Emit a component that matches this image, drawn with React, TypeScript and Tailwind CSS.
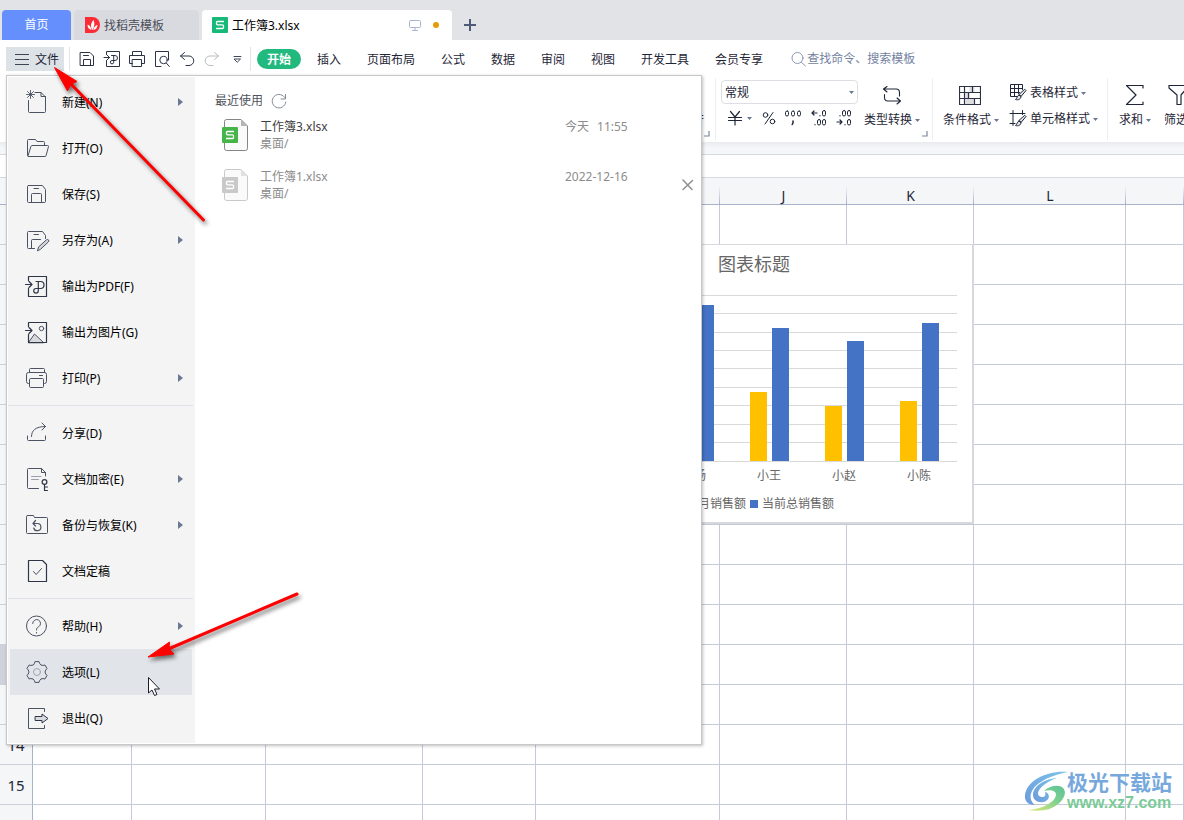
import { ReactNode } from 'react';
import clsx from 'clsx';

type IconProps = { size?: number; className?: string; children: ReactNode };

function Icon({ size = 20, className, children }: IconProps) {
  return (
    <svg
      width={size}
      height={size}
      viewBox={`0 0 ${size} ${size}`}
      fill="none"
      stroke="currentColor"
      strokeLinejoin="round"
      strokeLinecap="round"
      aria-hidden="true"
      className={clsx('block shrink-0', className)}
    >
      {children}
    </svg>
  );
}

function Caret() {
  return (
    <svg width="5" height="3" viewBox="0 0 5 3" className="block shrink-0" aria-hidden="true">
      <path d="M0 0h5L2.5 3z" fill="#6b7894" />
    </svg>
  );
}

function Corner() {
  return (
    <svg width="6" height="6" viewBox="0 0 6 6" className="block shrink-0" aria-hidden="true">
      <path d="M5 0v5H0" fill="none" stroke="#7d879d" strokeWidth="1.2" />
    </svg>
  );
}

// six-lobed outline for the options icon
const gearPath = () => {
  const pts: string[] = [];
  for (let i = 0; i < 6; i++) {
    for (const [deg, r] of [[-17, 9], [-11, 10.6], [11, 10.6], [17, 9], [30, 8]]) {
      const a = ((i * 60 + deg - 90) * Math.PI) / 180;
      pts.push(`${(14 + r * Math.cos(a)).toFixed(2)} ${(14 + r * Math.sin(a)).toFixed(2)}`);
    }
  }
  return `M${pts.join('L')}Z`;
};

type MenuItem = { label: string; icon: ReactNode; sub?: boolean; active?: boolean };

const menuGroups: MenuItem[][] = [
  [
    {
      label: '新建(N)',
      sub: true,
      icon: (
        <>
          <path d="M5.5 12.5v11q0 1 1 1h15q1 0 1-1V9L18 4.5h-6M18 4.5v4h4.5" />
          <path d="M7.5 2.5v8M3.5 6.5h8M4.5 3.5l6 6M10.5 3.5l-6 6" strokeWidth="0.9" />
        </>
      ),
    },
    {
      label: '打开(O)',
      icon: (
        <>
          <path d="M21.5 11V8.5q0-1-1-1H14L12.5 5.5h-7q-1 0-1 1v15q0 1 1 1" />
          <path d="M9.3 11.5h15.2q1.2 0 1 1l-2.4 9q-.2 1-1.2 1H5.8q-.9 0-.7-1l2.8-9q.3-1 1.4-1z" />
        </>
      ),
    },
    {
      label: '保存(S)',
      icon: <path d="M5.5 5.5H19.5l3 4v12q0 1-1 1h-16q-1 0-1-1v-15q0-1 1-1zM8.5 22.5v-8q0-1 1-1h8q1 0 1 1v8M11 8.5h4.5" />,
    },
    {
      label: '另存为(A)',
      sub: true,
      icon: (
        <>
          <path d="M11.5 22.5h-6q-1 0-1-1v-15q0-1 1-1h14l3 4v3M8.5 22.5v-8q0-1 1-1h8M11 8.5h4.5" />
          <path d="M14.5 24.5l1.2-3.7 7.8-7q1.2-.8 2 .1.8 1-.1 2l-7.7 7.2z" fill="#d5d7dc" />
        </>
      ),
    },
    {
      label: '输出为PDF(F)',
      icon: (
        <>
          <path d="M5.5 8.5v-4h18v20h-18v-8M2.5 12.5h6M6 9.5l3 3-3 3" stroke="#2f3647" strokeWidth="1.2" />
          <path d="M13 9.5h4.5a3.5 3.5 0 0 1 0 7H13a2.3 2.3 0 1 0 2.3 2.3V9.5" stroke="#2f3647" strokeWidth="1.2" />
        </>
      ),
    },
    {
      label: '输出为图片(G)',
      icon: (
        <>
          <path d="M5.5 24.5l6-8.5 9 8.5z" fill="#d8dade" />
          <path d="M5.5 8.5v-4h18v20h-18v-8M2.5 12.5h6M6 9.5l3 3-3 3" stroke="#2f3647" strokeWidth="1.2" />
          <circle cx="18.5" cy="10.5" r="2.2" />
        </>
      ),
    },
    {
      label: '打印(P)',
      sub: true,
      icon: (
        <path d="M6.5 8.5v-3q0-1 1-1h13q1 0 1 1v3M6.5 19.5h-1q-2 0-2-2v-7q0-2 2-2h16q2 0 2 2v7q0 2-2 2h-1M6.5 15.5q0-1 1-1h12q1 0 1 1v7q0 1-1 1h-12q-1 0-1-1zM16.5 11.5h3" />
      ),
    },
  ],
  [
    {
      label: '分享(D)',
      icon: <path d="M4.5 17v3.5q0 1 1 1h16q1 0 1-1V17M8.5 17.5c0-6 4-10 14-10M19 4l3.5 3.5L19 11" />,
    },
    {
      label: '文档加密(E)',
      sub: true,
      icon: (
        <>
          <path d="M15.5 23.5h-10q-1 0-1-1v-18q0-1 1-1h13l4 4V11M18.5 3.5v4h4" />
          <path d="M8.5 11.5h9.5M8.5 14.5h7" stroke="#9aa0ab" />
          <path d="M21.5 19.5v6h3M21.5 22h3" stroke="#2f3647" strokeWidth="1.2" />
          <circle cx="21.5" cy="17" r="2.4" stroke="#2f3647" strokeWidth="1.2" />
        </>
      ),
    },
    {
      label: '备份与恢复(K)',
      sub: true,
      icon: (
        <>
          <path d="M4.5 4.5h6l1 2h12q1 0 1 1v14q0 1-1 1h-19q-1 0-1-1v-16q0-1 1-1z" />
          <path d="M10.5 12.5h4a3.6 3.6 0 1 1-3.7 4.5M12.5 9.5l-2.5 3 2.5 2.5" strokeWidth="1.2" />
        </>
      ),
    },
    {
      label: '文档定稿',
      icon: (
        <>
          <path d="M5.5 3.5h14l4 4v17h-18z" stroke="#2f3647" strokeWidth="1.2" />
          <path d="M10.5 14.5l2.7 3 5.3-6" />
        </>
      ),
    },
  ],
  [
    {
      label: '帮助(H)',
      sub: true,
      icon: (
        <>
          <circle cx="13.5" cy="14" r="10" />
          <path d="M9.7 11.5a3.9 3.9 0 1 1 6 3.2c-1.5 1-2.2 1.5-2.2 3.3M13.5 20.5v.5" />
        </>
      ),
    },
    {
      label: '选项(L)',
      active: true,
      icon: (
        <>
          <path d={gearPath()} />
          <circle cx="14" cy="14" r="3.5" stroke="#a0a5b0" />
        </>
      ),
    },
    {
      label: '退出(Q)',
      icon: (
        <>
          <path d="M21.5 7.5v-3h-16v20h16v-3" />
          <path d="M12.5 12.5h6.5V10l6 4.5-6 4.5v-2.5h-6.5z" fill="#d8dade" stroke="#2f3647" />
        </>
      ),
    },
  ],
];

const quickTools: { name: string; muted?: boolean; icon: ReactNode }[] = [
  { name: '保存', icon: <path d="M3.5 3.5h9.5l3.5 3.5v9.5h-13zM6.5 16.5v-6h7v6M6.5 6.5h5" /> },
  {
    name: '输出为PDF',
    icon: <path d="M4.5 5.5v-3h13v15h-13v-6M2 8.5h5.5M5 6l2.5 2.5L5 11M9.5 6.5h3.5a2.5 2.5 0 0 1 0 5h-3a1.7 1.7 0 1 0 1.7 1.7V6.5" />,
  },
  { name: '打印', icon: <path d="M5.5 6.5v-4h9v4M5.5 14.5h-3v-8h15v8h-3M5.5 10.5h9v7h-9z" /> },
  {
    name: '打印预览',
    icon: (
      <>
        <path d="M9 17.5H3.5v-15h13V11" />
        <circle cx="11.5" cy="11" r="3.7" />
        <path d="M14.3 14l3 3.5" />
      </>
    ),
  },
  { name: '撤销', icon: <path d="M7.5 3.5l-4 3.5 4 3.5M3.5 7h8.5a4.5 4.5 0 0 1 0 9.5H9" /> },
  { name: '恢复', muted: true, icon: <path d="M12.5 3.5l4 3.5-4 3.5M16.5 7H8a4.5 4.5 0 0 0 0 9.5h3" /> },
  { name: '更多', icon: <path d="M7 7.5h7M7.5 10h6l-3 3z" strokeWidth="0.9" /> },
];

const ribbonTabs = ['插入', '页面布局', '公式', '数据', '审阅', '视图', '开发工具', '会员专享'];

const columns = [
  { name: 'E', width: 'w-[99px]' },
  { name: 'F', width: 'w-[134px]' },
  { name: 'G', width: 'w-[157px]' },
  { name: 'H', width: 'w-[113px]' },
  { name: 'I', width: 'w-[184px]' },
  { name: 'J', width: 'w-[127px]' },
  { name: 'K', width: 'w-[127px]' },
  { name: 'L', width: 'w-[152px]' },
  { name: '', width: '' },
];
const rows = Array.from({ length: 16 }, (_, i) => i + 1);
const selectedRow = 12;

const recentFiles = [
  { name: '工作簿3.xlsx', folder: '桌面/', time: ['今天', '11:55'], missing: false },
  { name: '工作簿1.xlsx', folder: '桌面/', time: ['2022-12-16'], missing: true },
];

const sales = [
  { name: '小张', month: 64, total: 128 },
  { name: '小杨', month: 72, total: 156 },
  { name: '小王', month: 69, total: 133 },
  { name: '小赵', month: 55, total: 120 },
  { name: '小陈', month: 60, total: 138 },
];

function SheetLogo({ className }: { className?: string }) {
  return (
    <svg width="16" height="16" viewBox="0 0 16 16" className={clsx('block shrink-0', className)} aria-hidden="true">
      <rect width="16" height="16" rx="1" fill="currentColor" />
      <path d="M12 4.5H5.5q-1 0-1 1v1.3q0 1 1 1h5q1 0 1 1v1.700q0 1-1 1H4" fill="none" stroke="#fff" strokeWidth="1.3" />
    </svg>
  );
}

function TitleTabs() {
  return (
    <header className="flex h-10 shrink-0 items-end bg-[#e2e3e7] pl-0.5">
      <button className="h-[30px] w-[69px] rounded-t bg-[#648ffc] text-white">首页</button>
      <button className="ml-[3px] flex h-[30px] w-[125px] items-center gap-1 rounded-t bg-[#d9dadf] pl-[11px] text-[#494d59]">
        <svg width="15" height="16" viewBox="0 0 15 16" aria-hidden="true">
          <path d="M0 0h7.5a7.5 8 0 0 1 0 16H0z" fill="#fb2c36" />
          <path d="M7.5 13C5 10 6 5.5 8.5 3c1.5 3 1 7-1 10zM6.5 13C4 12.5 2.5 10.5 2.5 7.5c2 .6 3.500 2.500 4 5.500zM8.300 13c.7-2.800 2-4.500 4.200-5-.2 3-1.700 4.700-4.200 5z" fill="#fff" />
        </svg>
        <span className="pt-px">找稻壳模板</span>
      </button>
      <div className="ml-[3px] flex h-[30px] w-[250px] items-center rounded-t bg-white pr-[13px] pl-[10px] text-black">
        <SheetLogo className="text-[#17b978]" />
        <span className="ml-1 pt-0.5">工作簿3.xlsx</span>
        <Icon size={12} className="ml-auto text-[#a9b4d0]">
          <path d="M1.5 1.5h9q1 0 1 1v5q0 1-1 1h-9q-1 0-1-1v-5q0-1 1-1zM6 8.5v3M3.5 11.5h5" />
        </Icon>
        <span className="ml-3 size-[6px] rounded-full bg-[#e69b0a]" />
      </div>
      <button aria-label="新建标签" className="flex h-[30px] w-9 items-center justify-center text-[#4d5a78]">
        <Icon size={12}>
          <path d="M6 0v12M0 6h12" strokeWidth="2" strokeLinecap="butt" />
        </Icon>
      </button>
    </header>
  );
}

function MenuBar() {
  return (
    <nav className="flex h-[38px] shrink-0 items-center bg-white pl-1.5 text-[#1f2638]">
      <button className="flex h-6 w-[58px] shrink-0 items-center gap-1.5 bg-[#dde2e6] pl-[9px] whitespace-nowrap">
        <svg width="14" height="11" viewBox="0 0 14 11" className="block shrink-0" aria-hidden="true">
          <path d="M0 .5h14M0 5.5h14M0 10.5h14" stroke="#3b4354" />
        </svg>
        <span className="pt-px">文件</span>
      </button>
      <span className="ml-[5px] h-6 w-px bg-[#e2e4e9]" />
      <div className="ml-1 flex">
        {quickTools.map((tool) => (
          <button
            key={tool.name}
            aria-label={tool.name}
            className={clsx('flex w-[25px] justify-center', tool.muted ? 'text-[#b8bbc2]' : 'text-[#2b3344]')}
          >
            <Icon>{tool.icon}</Icon>
          </button>
        ))}
      </div>
      <span className="ml-px h-6 w-px bg-[#e2e4e9]" />
      <button className="ml-1.5 h-5 w-11 shrink-0 rounded-full bg-[#22b97e] pt-px font-bold text-white">开始</button>
      <div className="ml-4 flex gap-[26px] pt-0.5 whitespace-nowrap">
        {ribbonTabs.map((tab) => (
          <button key={tab}>{tab}</button>
        ))}
      </div>
      <label className="ml-7 flex items-center text-[#8c99b3]">
        <Icon size={16}>
          <circle cx="6.5" cy="7" r="5.5" />
          <path d="M10.5 11.5l4 3.5" />
        </Icon>
        <input
          aria-label="查找命令、搜索模板"
          placeholder="查找命令、搜索模板"
          className="w-[140px] bg-transparent outline-none placeholder:text-[#7482a0] placeholder:opacity-100"
        />
      </label>
    </nav>
  );
}

function Ribbon() {
  return (
    <div className="relative z-10 flex h-16 shrink-0 overflow-hidden bg-white whitespace-nowrap text-[#1f2638]">
      <div className="flex h-[62px] w-[716px] shrink-0 items-end justify-end border-r border-[#eceef1] pr-[5px] pb-[3px]">
        <span className="mb-2">自动换行</span>
        <Corner />
      </div>
      <div className="flex h-[62px] shrink-0 border-r border-[#eceef1] pr-1 pl-[5px]">
        <div className="w-[137px] pt-0.5">
          <div className="relative">
            <select
              aria-label="数字格式"
              className="block h-6 w-full appearance-none rounded-sm border border-[#dcdee3] bg-white px-[3px] pt-px"
            >
              <option>常规</option>
            </select>
            <span className="pointer-events-none absolute top-[11px] right-1">
              <Caret />
            </span>
          </div>
          <div className="flex h-7 items-center pl-1.5">
            <button aria-label="货币" className="flex w-[26px] items-center gap-1">
              <Icon size={16}>
                <path d="M3.5 1.5L8 7l4.5-5.5M1.5 7.5h13M1.5 10.5h13M8 7v8" strokeWidth="1.2" />
              </Icon>
              <Caret />
            </button>
            <button aria-label="百分比" className="ml-[9px]">
              <Icon size={14}>
                <circle cx="3.5" cy="4" r="2.3" />
                <circle cx="10.5" cy="10.5" r="2.3" />
                <path d="M11 1.5L3 13" />
              </Icon>
            </button>
            <button aria-label="千位分隔" className="ml-2">
              <Icon size={18}>
                <rect x="1.5" y="2" width="3" height="5" rx="1.5" />
                <rect x="7.5" y="2" width="3" height="5" rx="1.5" />
                <rect x="13.5" y="2" width="3" height="5" rx="1.5" />
                <path d="M9 12v2l-.8 1.5" strokeWidth="1.5" />
              </Icon>
            </button>
            <button aria-label="增加小数位" className="ml-2">
              <Icon size={18}>
                <path d="M2 4h5M4 2L2 4l2 2M10 6.5v.3M5 15.5v.3" strokeWidth="1.2" />
                <rect x="12.5" y="1.5" width="3" height="5.5" rx="1.5" />
                <rect x="7.5" y="10.5" width="3" height="5.5" rx="1.5" />
                <rect x="12.5" y="10.5" width="3" height="5.5" rx="1.5" />
              </Icon>
            </button>
            <button aria-label="减少小数位" className="ml-[7px]">
              <Icon size={18}>
                <path d="M2 13h5M5 11l2 2-2 2M10 15.5v.3M5 6.5v.3" strokeWidth="1.2" />
                <rect x="7.5" y="1.5" width="3" height="5.5" rx="1.5" />
                <rect x="12.5" y="1.5" width="3" height="5.5" rx="1.5" />
                <rect x="12.5" y="10.5" width="3" height="5.5" rx="1.5" />
              </Icon>
            </button>
          </div>
        </div>
        <button className="ml-1.5 flex flex-col gap-1.5 pt-[7px]">
          <Icon className="ml-[18px]">
            <path d="M5 1.5L1.5 4 5 7M1.5 4H14q3.5 0 3.5 3.5v3.5M15 13l3.5 3-3.5 3M18.5 16H6q-3.5 0-3.5-3.5V9.5" strokeWidth="1.1" />
          </Icon>
          <span className="flex items-center gap-[3px] leading-[18px]">
            类型转换
            <Caret />
          </span>
        </button>
        <span className="mt-auto ml-0.5 pb-[3px]">
          <Corner />
        </span>
      </div>
      <div className="flex h-[62px] shrink-0 border-r border-[#eceef1] pr-[9px] pl-2.5">
        <button className="flex flex-col gap-1.5 pt-[7px]">
          <svg width="22" height="20" viewBox="0 0 22 20" className="ml-4 block" aria-hidden="true">
            <path d="M10.5 1.5h5v6h-5zM6.5 7.500h4v6h-4zM6.500 13.500h9v6h-9z" fill="#dcdde1" />
            <path d="M.5 1.5h21v18H.5zM.5 7.5h21M.5 13.5h21M5.500 1.500v18M13.500 1.500v6M9.500 7.500v6M15.500 13.500v6" fill="none" stroke="#2b3344" strokeWidth="1.2" />
          </svg>
          <span className="flex items-center gap-[3px] leading-[18px]">
            条件格式
            <Caret />
          </span>
        </button>
        <div className="ml-[10px] flex flex-col gap-2 pt-1.5">
          <button className="flex items-center gap-[3px] leading-[18px]">
            <Icon size={18}>
              <path d="M8 12.5H1.5v-12h12v5M1.5 4.5h12M1.5 8.5h9M5.5.5v12M9.5.5v9" />
              <path d="M16 5.5l1 1-5 6-2-1.5zM10 11c-2 .5-1.5 3-3.500 4.500 2.500.8 5.500 0 5.500-3z" fill="#e3e4e8" />
            </Icon>
            表格样式
            <Caret />
          </button>
          <button className="flex items-center gap-[3px] leading-[18px]">
            <Icon size={18}>
              <path d="M1 3.5h15M4 .5v15M13.5.5v4M1 13.5h5" />
              <path d="M16 5.5l1 1-5 6-2-1.5zM10 11c-2 .5-1.5 3-3.500 4.500 2.500.8 5.500 0 5.500-3z" fill="#e3e4e8" />
            </Icon>
            单元格样式
            <Caret />
          </button>
        </div>
      </div>
      <div className="flex gap-[13px] pl-[11px]">
        <button className="flex flex-col gap-1.5 pt-[7px]">
          <Icon className="ml-1.5">
            <path d="M18 3V.5H1.5L11 10 1.5 19.5H18V17" strokeWidth="1.2" />
          </Icon>
          <span className="flex items-center gap-[3px] leading-[18px]">
            求和
            <Caret />
          </span>
        </button>
        <button className="flex flex-col gap-1.5 pt-[7px]">
          <Icon className="ml-1">
            <path d="M1 .5h18v2.5l-6 7v9.5H9V10L1 3z" strokeWidth="1.2" />
          </Icon>
          <span className="flex items-center gap-[3px] leading-[18px]">
            筛选
            <Caret />
          </span>
        </button>
      </div>
    </div>
  );
}

function SalesChart() {
  return (
    <figure className="absolute top-[66px] left-[535px] border border-r-2 border-b-2 border-[#d6d8dc] bg-white">
      <svg width="436" height="277" viewBox="1 1 436 277" role="img" aria-label="图表标题" className="block" fontSize="12" fill="#666">
        <text x="219" y="27" textAnchor="middle" fontSize="18">图表标题</text>
        {[51, 69, 88, 106, 124, 143, 161, 180, 198, 217].map((y) => (
          <path key={y} d={`M46 ${y + 0.5}H422`} stroke="#d9d9d9" />
        ))}
        {sales.map((s, i) => {
          const x = 65 + i * 75;
          return (
            <g key={s.name}>
              <rect x={x} y={217 - s.month} width="17" height={s.month} fill="#ffc000" />
              <rect x={x + 22} y={217 - s.total} width="17" height={s.total} fill="#4472c4" />
              <text x={x + 19} y="236" textAnchor="middle">{s.name}</text>
            </g>
          );
        })}
        <rect x="139" y="256" width="8" height="8" fill="#ffc000" />
        <text x="151" y="264">本月销售额</text>
        <rect x="215" y="256" width="8" height="8" fill="#4472c4" />
        <text x="227" y="264">当前总销售额</text>
      </svg>
    </figure>
  );
}

function Sheet() {
  return (
    <main className="relative flex-1 overflow-hidden bg-white">
      <table className="w-full table-fixed border-separate border-spacing-0 text-sm text-[#1f2638]">
        <thead>
          <tr className="h-[27px]">
            <th aria-label="全选" className="w-[33px] border-r border-b border-[#a9b2cb] bg-[#f5f6f8]" />
            {columns.map((col) => (
              <th
                key={col.name}
                scope="col"
                className={clsx(
                  'border-b border-[#a9b2cb] bg-[#f5f6f8] bg-[linear-gradient(to_top,#a9b2cb,transparent)] bg-[length:1px_18px] bg-right-bottom bg-no-repeat p-0 pt-2.5 leading-4 font-normal',
                  col.width,
                )}
              >
                {col.name}
              </th>
            ))}
          </tr>
        </thead>
        <tbody>
          {rows.map((row) => (
            <tr key={row} className="h-10">
              <th
                scope="row"
                className={clsx(
                  'border-r border-b border-r-[#a9b2cb] border-b-[#ccd1de] p-0 pt-0.5 text-[15px] font-normal',
                  row === selectedRow ? 'bg-[#cfd2db]' : 'bg-[#f5f6f8]',
                )}
              >
                {row}
              </th>
              {columns.map((col) => (
                <td key={col.name} className="border-r border-b border-[#c5cadb] p-0" />
              ))}
            </tr>
          ))}
        </tbody>
      </table>
      <SalesChart />
    </main>
  );
}

function RecentFiles() {
  return (
    <section className="flex-1 pt-3.5 pl-5 text-[#8c8c8c]">
      <h2 className="flex h-[19px] items-center gap-2 text-[#50545c]">
        <span className="pt-px">最近使用</span>
        <button aria-label="刷新" className="text-[#858b98]">
          <Icon size={16}>
            <path d="M14.3 5.5A6.8 6.8 0 1 0 14.8 9M14.5 1.5v4.5h-4.5" />
          </Icon>
        </button>
      </h2>
      <ul>
        {recentFiles.map((file) => (
          <li key={file.name} className="flex h-[50px] items-center pl-[7px]">
            <div className={clsx('relative', file.missing ? 'text-[#c9c9c9]' : 'text-[#45b449]')}>
              <svg width="26" height="32" viewBox="0 0 26 32" className="block" aria-hidden="true">
                <path
                  d="M4.5.5H19L25.5 7v22.5q0 2-2 2h-19q-2 0-2-2v-27q0-2 2-2z"
                  fill="#fafafa"
                  stroke={file.missing ? '#c9c9c9' : '#858585'}
                />
                <path d="M19 .5V7h6.5z" fill={file.missing ? '#e0e0e0' : '#b5b5b5'} />
              </svg>
              <SheetLogo className="absolute top-2 left-0" />
            </div>
            <div className="ml-3 leading-[17px]">
              <p className={file.missing ? 'text-[#8c8c8c]' : 'text-[#404040]'}>{file.name}</p>
              <p>{file.folder}</p>
            </div>
            <div className="ml-auto flex h-[34px] w-28 gap-2 leading-[17px]">
              {file.time.map((part) => (
                <time key={part}>{part}</time>
              ))}
            </div>
            <span className="w-[23px]">
              {file.missing && (
                <button aria-label="移除" className="block text-[#8f8f8f]">
                  <Icon size={20}>
                    <path d="M6 5l9 9.500M15.500 5.500L6 14.500" strokeWidth="1.5" />
                  </Icon>
                </button>
              )}
            </span>
          </li>
        ))}
      </ul>
    </section>
  );
}

function FileMenu() {
  return (
    <div className="absolute top-[75px] left-1.5 z-20 flex w-[696px] border border-[#c6c8cc] bg-white p-px shadow-[1px_1px_3px_rgba(0,0,0,0.25)]">
      <div className="w-[187px] shrink-0 bg-[#f4f4f4] py-0.5 text-black">
        {menuGroups.map((group, i) => (
          <div key={i}>
            {i > 0 && <hr className="my-1 mr-0.5 border-[#dfe1e8]" />}
            {group.map((item) => (
              <button
                key={item.label}
                className={clsx(
                  'mr-[3px] ml-0.5 flex h-[46px] w-[182px] items-center pr-[9px] pl-[13px]',
                  item.active && 'bg-[#e1e4e9]',
                )}
              >
                <Icon size={28} className="text-[#4b5262]">
                  {item.icon}
                </Icon>
                <span className="ml-[11px] pt-0.5">{item.label}</span>
                {item.sub && (
                  <svg width="5" height="8" viewBox="0 0 5 8" className="ml-auto" aria-hidden="true">
                    <path d="M0 0l5 4-5 4z" fill="#6b7894" />
                  </svg>
                )}
              </button>
            ))}
          </div>
        ))}
      </div>
      <RecentFiles />
    </div>
  );
}

function Pointers() {
  return (
    <svg width="310" height="710" viewBox="0 0 310 710" className="pointer-events-none absolute top-0 left-0 z-30" aria-hidden="true">
      <g fill="#fe0000" stroke="#fe0000" className="drop-shadow-[2px_3px_2px_rgba(0,0,0,0.55)]">
        <path d="M70 83L203.5 220" strokeWidth="3" strokeLinecap="round" />
        <path d="M54.5 67.5l22.500 14-6 2.500-3.500 7z" />
        <path d="M166 650L297 594" strokeWidth="3" strokeLinecap="round" />
        <path d="M148 657l21.500-15-.5 7 5 5z" />
      </g>
      <path d="M148.5 677.5v15.5l3.500-3 2.500 5.500 2.500-1-2.500-5.500h5z" fill="#fff" stroke="#1c1f2b" />
    </svg>
  );
}

function SiteBadge() {
  return (
    <div className="absolute right-3 bottom-2 z-10 flex items-center">
      <svg width="44" height="42" viewBox="0 0 44 42" aria-hidden="true">
        <defs>
          <linearGradient id="swirlBlue" x1="0" y1="1" x2="1" y2="0">
            <stop offset="0" stopColor="#6b9bdb" />
            <stop offset="1" stopColor="#7cc3ea" />
          </linearGradient>
          <linearGradient id="swirlGreen" x1="0" y1="1" x2="1" y2="0">
            <stop offset="0" stopColor="#e4e978" />
            <stop offset="0.6" stopColor="#7ccf8f" />
            <stop offset="1" stopColor="#5cc397" />
          </linearGradient>
        </defs>
        <path d="M44 2C24 0 3 10 1 25c-.8 6 3 10 10 10C4 30 5 19 17 12 24 7 34 4 44 2z" fill="url(#swirlBlue)" />
        <path d="M33 8C19 9 9 17 9 25c0 6 7 9 13 6 4-2 4-8-1-9 1 3 0 5-3 5-8-1-4-12 15-19z" fill="url(#swirlBlue)" />
        <path d="M20 21c5-5 15-7 19-3 6 6-3 19-18 22-6 1-12 1-17 0 15-1 27-8 28-15 .5-4-5-6-12-4z" fill="url(#swirlGreen)" />
      </svg>
      <div className="-ml-px whitespace-nowrap">
        <p className="text-[21px] leading-6 font-bold text-[#77a8dc]">极光下载站</p>
        <p className="font-['Liberation_Sans',sans-serif] text-base leading-[18px] font-bold text-[#7bcb97]">www.xz7.com</p>
      </div>
    </div>
  );
}

export default function App() {
  return (
    <div className="relative flex h-screen flex-col overflow-hidden bg-[#f5f6f8] font-['Noto_Sans','Noto_Sans_CJK_SC',sans-serif] text-xs">
      <TitleTabs />
      <MenuBar />
      <Ribbon />
      <div className="h-3 shrink-0 bg-linear-to-b from-[#e9ebee] to-[#f5f6f8] to-50%" />
      <div className="h-6 shrink-0 border-y border-[#d6d9df] bg-white" />
      <Sheet />
      <FileMenu />
      <Pointers />
      <SiteBadge />
    </div>
  );
}
